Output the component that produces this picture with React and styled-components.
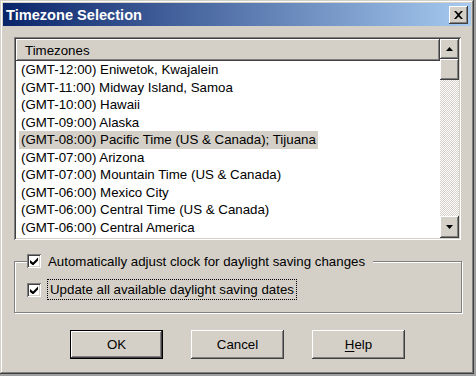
import React from "react";
import styled, { createGlobalStyle } from "styled-components";

const face = "#d4d0c8";

const GlobalStyle = createGlobalStyle`
  html, body {
    margin: 0;
    padding: 0;
    background: #a0a0a0;
  }
  body {
    font-family: "Liberation Sans", Arial, sans-serif;
    font-size: 13.3px;
    color: #000;
  }
`;

const raised = `
  box-shadow: inset -1px -1px #404040, inset 1px 1px #fff,
    inset -2px -2px #808080, inset 2px 2px ${face};
`;

const sunken = `
  box-shadow: inset 1px 1px #808080, inset -1px -1px #fff,
    inset 2px 2px #404040, inset -2px -2px ${face};
`;

const Window = styled.div`
  box-sizing: border-box;
  width: 474px;
  height: 374px;
  padding: 3px;
  background: ${face};
  box-shadow: inset -1px -1px #404040, inset 1px 1px ${face},
    inset -2px -2px #808080, inset 2px 2px #fff;
  display: flex;
  flex-direction: column;
`;

const TitleBar = styled.div`
  height: 23px;
  display: flex;
  align-items: center;
  justify-content: space-between;
  padding: 0 3px 0 3px;
  background: linear-gradient(to right, #0a246a, #a6caf0);
`;

const Title = styled.span`
  color: #fff;
  font-weight: bold;
  font-size: 14.6px;
`;

const CloseButton = styled.div`
  width: 19px;
  height: 18px;
  background: ${face};
  ${raised}
  display: flex;
  align-items: center;
  justify-content: center;
`;

const Body = styled.div`
  flex: 1;
  display: flex;
  flex-direction: column;
  padding: 11px 10px 0 11px;
`;

const ListBox = styled.div`
  box-sizing: border-box;
  height: 203px;
  padding: 2px;
  background: #fff;
  ${sunken}
  display: flex;
`;

const ListMain = styled.div`
  flex: 1;
  display: flex;
  flex-direction: column;
`;

const Header = styled.div`
  height: 22px;
  box-sizing: border-box;
  background: ${face};
  ${raised}
  display: flex;
  align-items: center;
  padding-left: 9px;
`;

const Rows = styled.div`
  padding-left: 3px;
`;

const Row = styled.div`
  height: 17.5px;
  line-height: 17.5px;
  white-space: nowrap;
`;

const RowText = styled.span`
  display: inline-block;
  padding: 0 2px;
  background: ${(p) => (p.$selected ? face : "transparent")};
`;

const ScrollBar = styled.div`
  width: 19px;
  display: flex;
  flex-direction: column;
  background-color: ${face};
  background-image: repeating-conic-gradient(#fff 0 25%, ${face} 0 50%);
  background-size: 2px 2px;
`;

const ScrollButton = styled.div`
  height: ${(p) => p.$h || 20}px;
  background: ${face};
  ${raised}
  display: flex;
  align-items: center;
  justify-content: center;
`;

const Track = styled.div`
  flex: 1;
`;

const GroupBox = styled.div`
  margin-top: 21px;
  margin-right: -1px;
  height: 52px;
  box-sizing: border-box;
  border: 1px solid #808080;
  box-shadow: 1px 1px 0 #fff, inset 1px 1px 0 #fff;
  padding-left: 12px;
  display: flex;
  flex-direction: column;
  align-items: flex-start;
`;

const Legend = styled.div`
  margin-top: -9px;
  height: 16px;
  display: flex;
  align-items: center;
  background: ${face};
  padding-right: 8px;
`;

const CheckRow = styled.div`
  margin-top: 10px;
  height: 21px;
  display: flex;
  align-items: center;
`;

const CheckBox = styled.span`
  box-sizing: border-box;
  width: 14px;
  height: 14px;
  background: #fff;
  ${sunken}
  display: inline-flex;
  align-items: center;
  justify-content: center;
  flex: none;
`;

const Label = styled.span`
  margin-left: ${(p) => (p.$focused ? 6 : 7)}px;
  white-space: nowrap;
  ${(p) =>
    p.$focused &&
    `
    border: 1px dotted #000;
    padding: 0 2px;
    height: 19px;
    line-height: 19px;
  `}
`;

const ButtonRow = styled.div`
  margin-top: 17px;
  display: flex;
  justify-content: center;
  gap: 28px;
`;

const Button = styled.div`
  box-sizing: border-box;
  width: 93px;
  height: 29px;
  background: ${face};
  display: flex;
  align-items: center;
  justify-content: center;
  ${(p) =>
    p.$default
      ? `border: 1px solid #000;
         box-shadow: inset -1px -1px #404040, inset 1px 1px #fff,
           inset -2px -2px #808080;`
      : raised}
  u {
    text-decoration: underline;
    text-underline-offset: 2px;
  }
`;

const Check = () => (
  <svg width="8" height="8" viewBox="0 0 8 8">
    <path d="M0 3v3l2.5 2h1L8 3.5V0.5L3 5.5z" fill="#000" />
  </svg>
);

const Arrow = ({ down }) => (
  <svg width="7" height="4" viewBox="0 0 7 4">
    <path d={down ? "M0 0h7L3.5 4z" : "M3.5 0L7 4H0z"} fill="#000" />
  </svg>
);

const zones = [
  "(GMT-12:00) Eniwetok, Kwajalein",
  "(GMT-11:00) Midway Island, Samoa",
  "(GMT-10:00) Hawaii",
  "(GMT-09:00) Alaska",
  "(GMT-08:00) Pacific Time (US & Canada); Tijuana",
  "(GMT-07:00) Arizona",
  "(GMT-07:00) Mountain Time (US & Canada)",
  "(GMT-06:00) Mexico City",
  "(GMT-06:00) Central Time (US & Canada)",
  "(GMT-06:00) Central America",
];

const App = () => {
  return (
    <>
      <GlobalStyle />
      <Window>
        <TitleBar>
          <Title>Timezone Selection</Title>
          <CloseButton>
            <svg width="9" height="8" viewBox="0 0 9 8">
              <path
                d="M0 0h2l2.5 2.5L7 0h2L5.5 4 9 8H7L4.5 5.5 2 8H0l3.5-4z"
                fill="#000"
              />
            </svg>
          </CloseButton>
        </TitleBar>
        <Body>
          <ListBox>
            <ListMain>
              <Header>Timezones</Header>
              <Rows>
                {zones.map((z, i) => (
                  <Row key={i}>
                    <RowText $selected={i === 4}>{z}</RowText>
                  </Row>
                ))}
              </Rows>
            </ListMain>
            <ScrollBar>
              <ScrollButton>
                <Arrow />
              </ScrollButton>
              <ScrollButton $h={21} />
              <Track />
              <ScrollButton $h={22}>
                <Arrow down />
              </ScrollButton>
            </ScrollBar>
          </ListBox>
          <GroupBox>
            <Legend>
              <CheckBox>
                <Check />
              </CheckBox>
              <Label>Automatically adjust clock for daylight saving changes</Label>
            </Legend>
            <CheckRow>
              <CheckBox>
                <Check />
              </CheckBox>
              <Label $focused>Update all available daylight saving dates</Label>
            </CheckRow>
          </GroupBox>
          <ButtonRow>
            <Button $default>OK</Button>
            <Button>Cancel</Button>
            <Button>
              <span>
                <u>H</u>elp
              </span>
            </Button>
          </ButtonRow>
        </Body>
      </Window>
    </>
  );
};

export default App;
